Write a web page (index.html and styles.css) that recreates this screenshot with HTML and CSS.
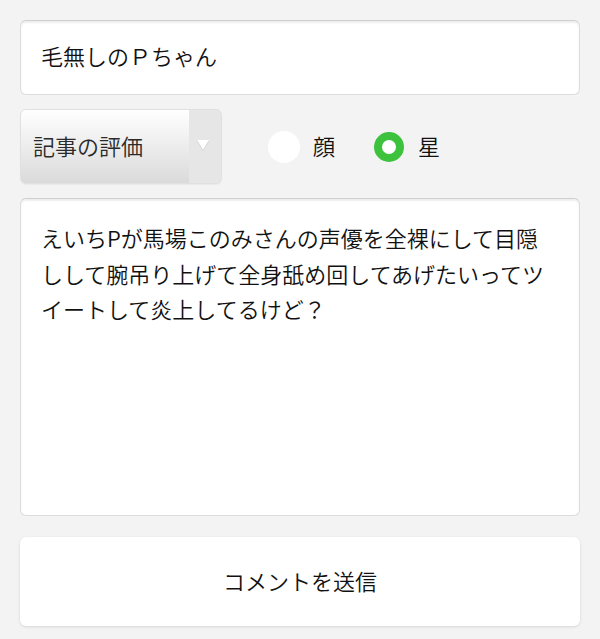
FILE: index.html
```html
<!DOCTYPE html>
<html lang="ja">
<head>
    <meta charset="UTF-8">
    <meta name="viewport" content="width=device-width, initial-scale=1.0">
    <title>コメント</title>
    <link rel="stylesheet" href="styles.css">
</head>
<body>
    <form class="comment-form">
        <input class="name-input" type="text" value="毛無しのＰちゃん">

        <div class="rating-row">
            <div class="select-wrap">
                <select class="rating-select">
                    <option>記事の評価</option>
                </select>
                <span class="select-arrow"></span>
            </div>
            <label class="radio-item">
                <input type="radio" name="kind" class="radio">
                <span>顔</span>
            </label>
            <label class="radio-item">
                <input type="radio" name="kind" class="radio" checked>
                <span>星</span>
            </label>
        </div>

        <textarea class="comment-body">えいちPが馬場このみさんの声優を全裸にして目隠しして腕吊り上げて全身舐め回してあげたいってツイートして炎上してるけど？</textarea>

        <button type="button" class="send-button">コメントを送信</button>
    </form>
</body>
</html>
```

FILE: styles.css
```css
body {
    margin: 0;
    background-color: #f3f3f3;
    font-family: "Noto Sans CJK JP", "Noto Sans", sans-serif;
    font-weight: 350;
    color: #222;
}
.comment-form {
    padding: 20px 20px 13px;
    display: flex;
    flex-direction: column;
}
.name-input {
    height: 75px;
    box-sizing: border-box;
    margin: 0;
    padding: 0 20px 5px;
    font-family: inherit;
    font-weight: inherit;
    font-size: 22px;
    color: #111;
    background: #fff;
    border: 1px solid #dcdcdc;
    border-top: 1px solid #cfcfcf;
    border-radius: 6px;
    box-shadow: inset 0 2px 2px rgba(0, 0, 0, 0.07);
    outline: none;
}
.rating-row {
    margin-top: 14px;
    height: 75px;
    display: flex;
    align-items: center;
}
.select-wrap {
    position: relative;
    width: 202px;
    height: 75px;
}
.rating-select {
    appearance: none;
    -webkit-appearance: none;
    width: 100%;
    height: 100%;
    margin: 0;
    padding: 0 0 3px 12px;
    font-family: inherit;
    font-weight: inherit;
    font-size: 22px;
    color: #2a2a2a;
    border: 1px solid #e0e0e0;
    border-radius: 6px;
    background: linear-gradient(to right, transparent 168px, #e6e6e6 168px),
                linear-gradient(#ffffff, #dadada);
    box-shadow: 0 1px 1px rgba(0, 0, 0, 0.04);
    outline: none;
}
.select-arrow {
    position: absolute;
    top: 31px;
    right: 13px;
    width: 0;
    height: 0;
    border-left: 6px solid transparent;
    border-right: 6px solid transparent;
    border-top: 10px solid #fff;
    filter: drop-shadow(0 1px 0 #c8c8c8);
    pointer-events: none;
}
.radio-item {
    display: flex;
    align-items: center;
    gap: 13px;
    font-size: 22px;
    color: #111;
    margin-left: 46px;
}
.radio-item span {
    margin-bottom: 3px;
}
.radio-item + .radio-item {
    margin-left: 38px;
}
.radio {
    appearance: none;
    -webkit-appearance: none;
    margin: 0;
    width: 32px;
    height: 32px;
    border-radius: 50%;
    background: #fff;
    border: none;
}
.radio:checked {
    box-sizing: border-box;
    border: 8px solid #3cc23c;
    width: 30px;
    height: 30px;
    margin: 0 1px;
}
.comment-body {
    margin-top: 14px;
    height: 318px;
    box-sizing: border-box;
    padding: 21px 20px;
    resize: none;
    font-family: inherit;
    font-weight: inherit;
    font-size: 22px;
    line-height: 35.5px;
    color: #111;
    background: #fff;
    border: 1px solid #dcdcdc;
    border-top: 1px solid #cfcfcf;
    border-radius: 6px;
    box-shadow: inset 0 2px 2px rgba(0, 0, 0, 0.07);
    outline: none;
}
.send-button {
    margin-top: 21px;
    height: 89px;
    padding-bottom: 5px;
    font-family: inherit;
    font-weight: inherit;
    font-size: 22px;
    color: #111;
    background: #fff;
    border: none;
    border-radius: 6px;
    box-shadow: 0 1px 3px rgba(0, 0, 0, 0.12);
    cursor: pointer;
}
```
